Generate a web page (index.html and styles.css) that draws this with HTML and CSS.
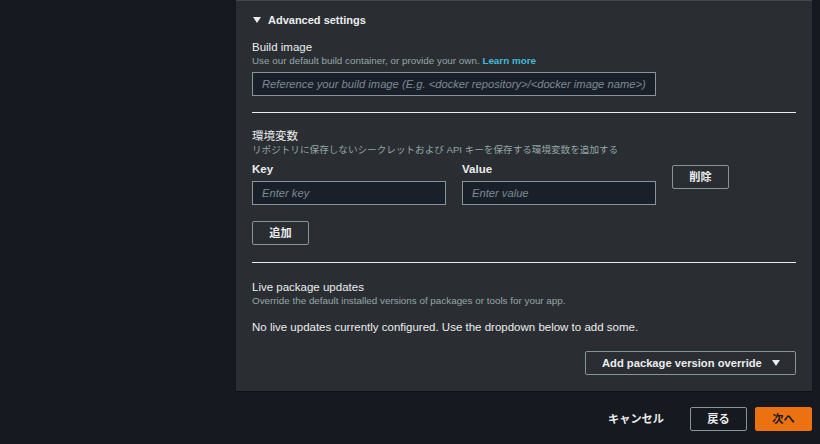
FILE: index.html
```html
<!DOCTYPE html>
<html lang="ja">
<head>
<meta charset="utf-8">
<title>Advanced settings</title>
<link rel="stylesheet" href="styles.css">
</head>
<body>
<div class="page">
  <section class="panel">
    <div class="adv-head">
      <svg class="caret" width="8" height="6" viewBox="0 0 8 6"><polygon points="0,0 8,0 4,6" fill="#eaeded"/></svg>
      <span>Advanced settings</span>
    </div>

    <div class="field first">
      <div class="label">Build image</div>
      <div class="desc">Use our default build container, or provide your own. <a class="link" href="#">Learn more</a></div>
      <input class="input input-wide" type="text" placeholder="Reference your build image (E.g. <docker repository>/<docker image name>)">
    </div>

    <hr class="divider">

    <div class="field">
      <div class="label">環境変数</div>
      <div class="desc desc-ja">リポジトリに保存しないシークレットおよび API キーを保存する環境変数を追加する</div>
      <div class="kv-row">
        <div class="kv-col">
          <div class="kv-label">Key</div>
          <input class="input" type="text" placeholder="Enter key">
        </div>
        <div class="kv-col">
          <div class="kv-label">Value</div>
          <input class="input" type="text" placeholder="Enter value">
        </div>
        <button class="btn kv-remove">削除</button>
      </div>
      <button class="btn add-btn">追加</button>
    </div>

    <hr class="divider divider-2">

    <div class="field live">
      <div class="label">Live package updates</div>
      <div class="desc">Override the default installed versions of packages or tools for your app.</div>
      <p class="empty">No live updates currently configured. Use the dropdown below to add some.</p>
      <div class="dropdown-row">
        <button class="btn dropdown">
          <span>Add package version override</span>
          <svg class="caret" width="8" height="6" viewBox="0 0 8 6"><polygon points="0,0 8,0 4,6" fill="#eaeded"/></svg>
        </button>
      </div>
    </div>
  </section>

  <footer class="actions">
    <button class="btn link-btn">キャンセル</button>
    <button class="btn">戻る</button>
    <button class="btn primary">次へ</button>
  </footer>
</div>
</body>
</html>
```

FILE: styles.css
```css
* { box-sizing: border-box; }

html, body {
  margin: 0;
  padding: 0;
  background: #16191f;
  height: 100%;
}

body {
  font-family: "Liberation Sans", "Noto Sans CJK JP", Arial, sans-serif;
  font-size: 11.5px;
  color: #d5dbdb;
}

.page {
  padding: 0 8px 0 236px;
}

.panel {
  background: #2a2e33;
  border-top: 1px solid #414750;
  padding: 11px 16px 16px;
  box-shadow: 0 1px 1px rgba(0, 0, 0, 0.3);
}

.adv-head {
  display: flex;
  align-items: center;
  gap: 7px;
  height: 16px;
  padding-left: 1px;
  font-size: 11px;
  font-weight: 700;
  color: #eaeded;
}

.field { display: flex; flex-direction: column; align-items: flex-start; }
.field.first { margin-top: 12px; }

.label {
  line-height: 14px;
  color: #eaeded;
}

.desc {
  font-size: 9.85px;
  line-height: 14px;
  color: #95a5a6;
}

.desc-ja { font-size: 9.6px; }

.link {
  color: #44b9d6;
  font-weight: 700;
  text-decoration: none;
}

.input {
  height: 24px;
  margin: 0;
  padding: 0 9px;
  background: #1a2029;
  border: 1px solid #879596;
  border-radius: 0;
  color: #d5dbdb;
  font-family: inherit;
  font-size: 11.2px;
  outline: none;
}

.input::placeholder {
  color: #7d8893;
  font-style: italic;
}

.input-wide {
  width: 404px;
  margin-top: 4px;
}

.divider {
  width: 100%;
  margin: 16px 0 0;
  border: 0;
  border-top: 1px solid #eaeded;
  height: 0;
}

.divider-2 { margin-top: 17px; }

.divider + .field { margin-top: 16px; }
.divider-2 + .field { margin-top: 17px; }

.kv-row {
  display: flex;
  align-items: flex-start;
  gap: 16px;
  margin-top: 5px;
}

.kv-col {
  display: flex;
  flex-direction: column;
  gap: 5px;
  width: 194px;
}

.kv-col .input { width: 194px; }

.kv-label {
  line-height: 14px;
  font-weight: 700;
  color: #eaeded;
}

.btn {
  height: 24px;
  margin: 0;
  padding: 0 16px;
  background: transparent;
  border: 1px solid #879596;
  border-radius: 2px;
  color: #eaeded;
  font-family: inherit;
  font-size: 11.2px;
  font-weight: 700;
  line-height: 22px;
  cursor: pointer;
}

.kv-remove {
  width: 57px;
  padding: 0;
  margin-top: 3px;
}

.add-btn {
  width: 57px;
  padding: 0;
  margin-top: 16px;
}

.empty {
  margin: 11px 0 0;
  line-height: 16px;
  color: #eaeded;
}

.dropdown-row {
  align-self: stretch;
  display: flex;
  justify-content: flex-end;
  margin-top: 16px;
}

.dropdown {
  display: flex;
  align-items: center;
  gap: 10px;
  width: 211px;
  padding: 0 15px 0 16px;
}

.actions {
  display: flex;
  justify-content: flex-end;
  align-items: center;
  gap: 8px;
  margin-top: 16px;
}

.actions .btn {
  width: 57px;
  padding: 0;
}

.actions .link-btn {
  width: auto;
  border-color: transparent;
  padding: 0 17px 0 16px;
}

.actions .primary {
  background: #ec7211;
  border-color: #ec7211;
  color: #16191f;
}
```
